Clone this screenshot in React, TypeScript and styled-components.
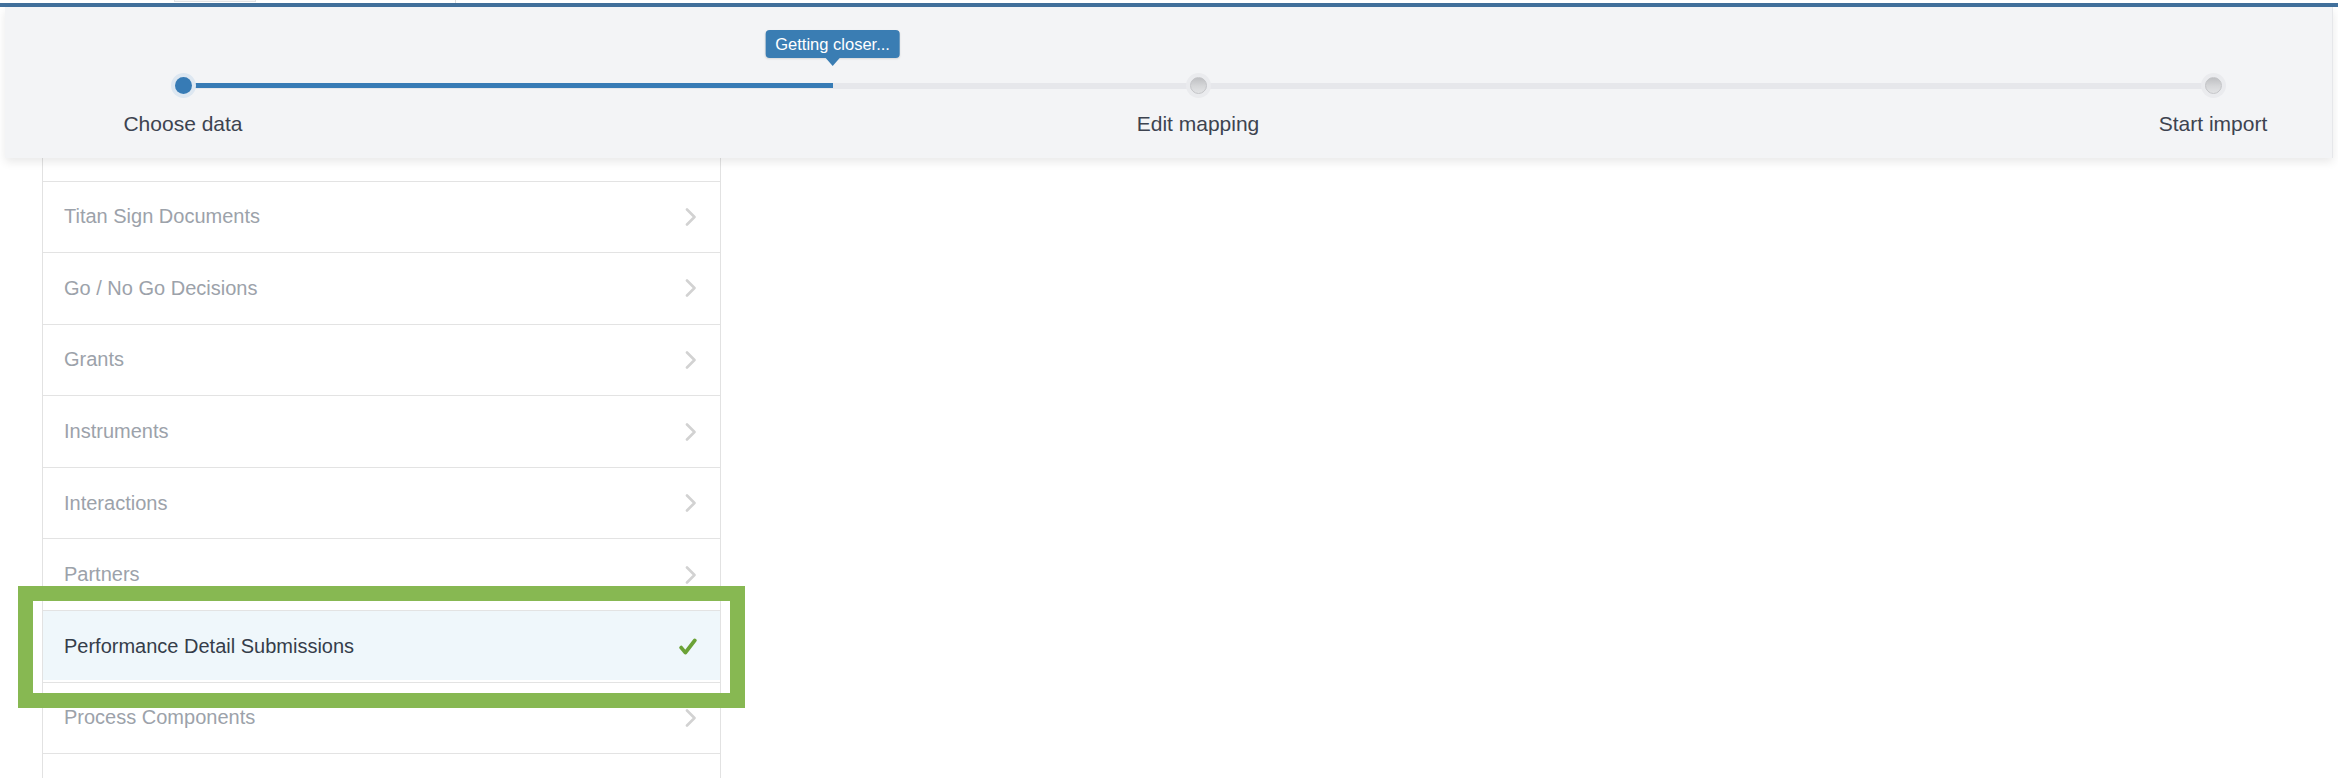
import React from "react";
import styled, { createGlobalStyle } from "styled-components";

const GlobalStyle = createGlobalStyle`
  html, body { margin: 0; padding: 0; background: #ffffff; }
  body { font-family: "Liberation Sans", Arial, Helvetica, sans-serif; }
  * { box-sizing: border-box; }
`;

const Page = styled.div`
  width: 2338px;
  height: 778px;
  overflow: hidden;
  background: #ffffff;
`;

const TopStrip = styled.div`
  display: flex;
  height: 3px;
  padding-left: 174px;
`;

const TopTab = styled.div`
  width: 82px;
  height: 2px;
  background: #f6f6f7;
  border: 1px solid #e1e2e4;
  border-top: none;
`;

const TopDivider = styled.div`
  width: 1px;
  height: 3px;
  margin-left: 199px;
  background: #dcdcdc;
`;

const AccentBar = styled.div`
  height: 4px;
  background: #41709c;
`;

const HeaderPanel = styled.div`
  position: relative;
  z-index: 2;
  height: 151px;
  margin: 0 5px 0 5px;
  background: #f3f4f6;
  border-right: 1px solid #e6e7ea;
  box-shadow: 0 4px 9px rgba(0, 0, 0, 0.09);
`;

const Stepper = styled.div`
  position: relative;
  display: flex;
  justify-content: space-between;
  width: 2190px;
  margin-left: 98px;
  padding-top: 66px;
`;

const Track = styled.div`
  position: absolute;
  top: 75.5px;
  left: 80px;
  right: 80px;
  height: 6px;
  background: #e6e7eb;
`;

const Fill = styled.div`
  position: absolute;
  left: 0;
  top: 0.5px;
  height: 5px;
  background: #377bb5;
`;

const Tooltip = styled.div`
  position: absolute;
  top: -52.5px;
  transform: translateX(-50%);
  height: 28px;
  padding: 0 10px;
  border-radius: 4px;
  background: #3a7db3;
  color: #ffffff;
  font-size: 16.5px;
  line-height: 28px;
  white-space: nowrap;
  box-shadow: 0 1px 2px rgba(0, 0, 0, 0.12);

  &::after {
    content: "";
    position: absolute;
    left: 50%;
    bottom: -8px;
    margin-left: -7px;
    border-left: 7px solid transparent;
    border-right: 7px solid transparent;
    border-top: 8px solid #3a7db3;
  }
`;

const Step = styled.div`
  position: relative;
  z-index: 1;
  width: 160px;
  display: flex;
  flex-direction: column;
  align-items: center;
`;

const Dot = styled.div<{ $active?: boolean }>`
  width: 17px;
  height: 17px;
  margin: 4px;
  border-radius: 50%;
  background: ${(p) =>
    p.$active
      ? "#377bb5"
      : "linear-gradient(180deg, #bfc0c3 0%, #d6d7d9 55%, #e2e3e5 100%)"};
  border: ${(p) => (p.$active ? "none" : "1px solid #c3c4c7")};
  box-shadow: 0 0 0 4px ${(p) => (p.$active ? "#dde7f1" : "#eaebee")};
`;

const StepLabel = styled.div`
  margin-top: 14px;
  font-size: 21px;
  line-height: 24px;
  color: #3d4350;
  white-space: nowrap;
`;

const ListPanel = styled.div`
  width: 679px;
  margin-left: 42px;
  border-left: 1px solid #e2e2e2;
  border-right: 1px solid #e2e2e2;
`;

const ListTop = styled.div`
  height: 22.5px;
`;

const Row = styled.div<{ $selected?: boolean }>`
  position: relative;
  height: 71.6px;
  display: flex;
  align-items: center;
  justify-content: space-between;
  padding: 0 23px 0 21px;
  border-top: 1px solid #e3e3e3;
  background: ${(p) => (p.$selected ? "#eff7fb" : "#ffffff")};
  box-shadow: ${(p) => (p.$selected ? "inset 0 -2px 0 #ffffff" : "none")};
`;

const RowText = styled.span<{ $selected?: boolean }>`
  font-size: 20px;
  color: ${(p) => (p.$selected ? "#353d4a" : "#9ca2aa")};
  white-space: nowrap;
`;

const Highlight = styled.div`
  position: absolute;
  z-index: 3;
  top: -25px;
  left: -25px;
  right: -25px;
  bottom: -26px;
  border: 15px solid #87b852;
  pointer-events: none;
`;

const Chevron = () => (
  <svg width="12" height="18" viewBox="0 0 12 18" aria-hidden="true">
    <polyline
      points="2,1.5 9.5,9 2,16.5"
      fill="none"
      stroke="#d2d2d2"
      strokeWidth="2.6"
      strokeLinecap="round"
      strokeLinejoin="round"
    />
  </svg>
);

const Check = () => (
  <svg width="18" height="17" viewBox="0 0 18 17" aria-hidden="true">
    <path
      d="M2.2 9.6 L6.4 14.6 L15.8 2.4"
      fill="none"
      stroke="#6ba236"
      strokeWidth="3.8"
      strokeLinecap="round"
      strokeLinejoin="round"
    />
  </svg>
);

const steps = ["Choose data", "Edit mapping", "Start import"];

const items = [
  "Titan Sign Documents",
  "Go / No Go Decisions",
  "Grants",
  "Instruments",
  "Interactions",
  "Partners",
  "Performance Detail Submissions",
  "Process Components",
  "",
];

const selectedItem = "Performance Detail Submissions";
const progress = 0.32;

export default function App() {
  return (
    <Page>
      <GlobalStyle />
      <TopStrip>
        <TopTab />
        <TopDivider />
      </TopStrip>
      <AccentBar />
      <HeaderPanel>
        <Stepper>
          <Track>
            <Fill style={{ width: `${progress * 100}%` }} />
            <Tooltip style={{ left: `${progress * 100}%` }}>Getting closer...</Tooltip>
          </Track>
          {steps.map((s, i) => (
            <Step key={s}>
              <Dot $active={i === 0} />
              <StepLabel>{s}</StepLabel>
            </Step>
          ))}
        </Stepper>
      </HeaderPanel>
      <ListPanel>
        <ListTop />
        {items.map((it, i) => {
          const sel = it === selectedItem;
          return (
            <Row key={i} $selected={sel}>
              <RowText $selected={sel}>{it}</RowText>
              {it && (sel ? <Check /> : <Chevron />)}
              {sel && <Highlight />}
            </Row>
          );
        })}
      </ListPanel>
    </Page>
  );
}
